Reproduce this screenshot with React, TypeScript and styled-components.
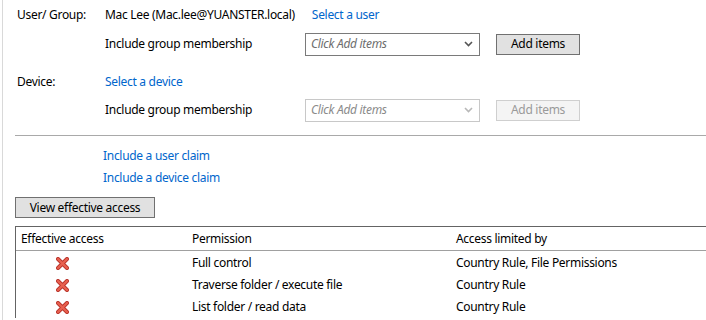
import React from 'react';
import styled, { createGlobalStyle } from 'styled-components';

const GlobalStyle = createGlobalStyle`
  html, body {
    margin: 0;
    padding: 0;
    background: #ffffff;
  }
  body {
    font-family: "Noto Sans", "Segoe UI", sans-serif;
    font-size: 12px;
    line-height: 16px;
    letter-spacing: -0.3px;
    color: #000;
  }
`;

const Frame = styled.div`
  margin-left: 2px;
  border-left: 1px solid #d9d9d9;
  height: 320px;
  overflow: hidden;
  padding-left: 12px;
  box-sizing: border-box;
`;

const Row = styled.div<{ $h: number; $mt?: number }>`
  display: grid;
  grid-template-columns: 90px auto;
  align-items: center;
  height: ${(p) => p.$h}px;
  margin-top: ${(p) => p.$mt ?? 0}px;
`;

const Label = styled.div`
  padding-left: 2px;
  white-space: nowrap;
`;

const Value = styled.div`
  display: flex;
  align-items: center;
  gap: 17px;
  white-space: nowrap;
`;

const Link = styled.a`
  color: #0066cc;
  text-decoration: none;
  cursor: pointer;
`;

const OptionRow = styled.div`
  display: flex;
  align-items: center;
  gap: 16px;
`;

const OptionLabel = styled.span`
  width: 184px;
  white-space: nowrap;
`;

const Select = styled.div<{ $disabled?: boolean }>`
  width: 175px;
  height: 23px;
  box-sizing: border-box;
  border: 1px solid ${(p) => (p.$disabled ? '#c8c8c8' : '#7a7a7a')};
  display: flex;
  align-items: center;
  justify-content: space-between;
  padding: 0 6px 0 5px;
  font-style: italic;
  color: ${(p) => (p.$disabled ? '#8a8a8a' : '#6d6d6d')};
  background: #fff;
`;

const Caret = styled.span<{ $disabled?: boolean }>`
  display: flex;
  color: ${(p) => (p.$disabled ? '#b8b8b8' : '#555')};
`;

const Button = styled.button<{ $disabled?: boolean; $w: number }>`
  font-family: inherit;
  font-size: 12px;
  line-height: 16px;
  letter-spacing: inherit;
  width: ${(p) => p.$w}px;
  height: 21px;
  padding: 0;
  box-sizing: border-box;
  border: 1px solid ${(p) => (p.$disabled ? '#cfcfcf' : '#707070')};
  background: ${(p) => (p.$disabled ? '#f4f4f4' : '#e1e1e1')};
  color: ${(p) => (p.$disabled ? '#9a9a9a' : '#000')};
  cursor: default;
`;

const Divider = styled.hr`
  margin: 11px 0 0;
  border: none;
  border-top: 1px solid #a9a9a9;
`;

const Claims = styled.div`
  display: flex;
  flex-direction: column;
  align-items: flex-start;
  gap: 6px;
  padding: 12px 0 0 88px;
`;

const ActionBar = styled.div`
  display: flex;
  padding-top: 11px;
`;

const Table = styled.div`
  margin-top: 8px;
  border-top: 1px solid #646464;
  border-left: 1px solid #646464;
`;

const TableRow = styled.div<{ $head?: boolean }>`
  display: grid;
  grid-template-columns: 176px 264px auto;
  align-items: center;
  height: ${(p) => (p.$head ? 23 : 22)}px;
  border-bottom: ${(p) => (p.$head ? '1px solid #a0a0a0' : 'none')};
  margin-bottom: ${(p) => (p.$head ? 1 : 0)}px;
`;

const Cell = styled.div<{ $pad?: number }>`
  padding-left: ${(p) => p.$pad ?? 0}px;
  white-space: nowrap;
  display: flex;
  align-items: center;
`;

const Chevron = () => (
  <svg width="9" height="6" viewBox="0 0 9 6">
    <path d="M1 1 L4.5 4.5 L8 1" fill="none" stroke="currentColor" strokeWidth="1.6" />
  </svg>
);

const DenyIcon = () => (
  <svg width="13" height="13" viewBox="0 0 13 13">
    <path d="M2 2 L11 11 M11 2 L2 11" stroke="#b8322a" strokeWidth="4" strokeLinecap="round" />
    <path d="M2 2 L11 11 M11 2 L2 11" stroke="#e8604f" strokeWidth="2.4" strokeLinecap="round" />
  </svg>
);

const rows = [
  { perm: 'Full control', limit: 'Country Rule, File Permissions' },
  { perm: 'Traverse folder / execute file', limit: 'Country Rule' },
  { perm: 'List folder / read data', limit: 'Country Rule' },
];

export default function App() {
  return (
    <>
      <GlobalStyle />
      <Frame>
        <Row $h={30}>
          <Label>User/ Group:</Label>
          <Value>
            Mac Lee (Mac.lee@YUANSTER.local)
            <Link>Select a user</Link>
          </Value>
        </Row>
        <Row $h={28}>
          <span />
          <OptionRow>
            <OptionLabel>Include group membership</OptionLabel>
            <Select>
              Click Add items
              <Caret><Chevron /></Caret>
            </Select>
            <Button $w={84}>Add items</Button>
          </OptionRow>
        </Row>
        <Row $h={24} $mt={12}>
          <Label>Device:</Label>
          <Value>
            <Link>Select a device</Link>
          </Value>
        </Row>
        <Row $h={28} $mt={2}>
          <span />
          <OptionRow>
            <OptionLabel>Include group membership</OptionLabel>
            <Select $disabled>
              Click Add items
              <Caret $disabled><Chevron /></Caret>
            </Select>
            <Button $disabled $w={84}>Add items</Button>
          </OptionRow>
        </Row>
        <Divider />
        <Claims>
          <Link>Include a user claim</Link>
          <Link>Include a device claim</Link>
        </Claims>
        <ActionBar>
          <Button $w={140}>View effective access</Button>
        </ActionBar>
        <Table>
          <TableRow $head>
            <Cell $pad={5}>Effective access</Cell>
            <Cell>Permission</Cell>
            <Cell>Access limited by</Cell>
          </TableRow>
          {rows.map((r) => (
            <TableRow key={r.perm}>
              <Cell $pad={40}><DenyIcon /></Cell>
              <Cell>{r.perm}</Cell>
              <Cell>{r.limit}</Cell>
            </TableRow>
          ))}
        </Table>
      </Frame>
    </>
  );
}
